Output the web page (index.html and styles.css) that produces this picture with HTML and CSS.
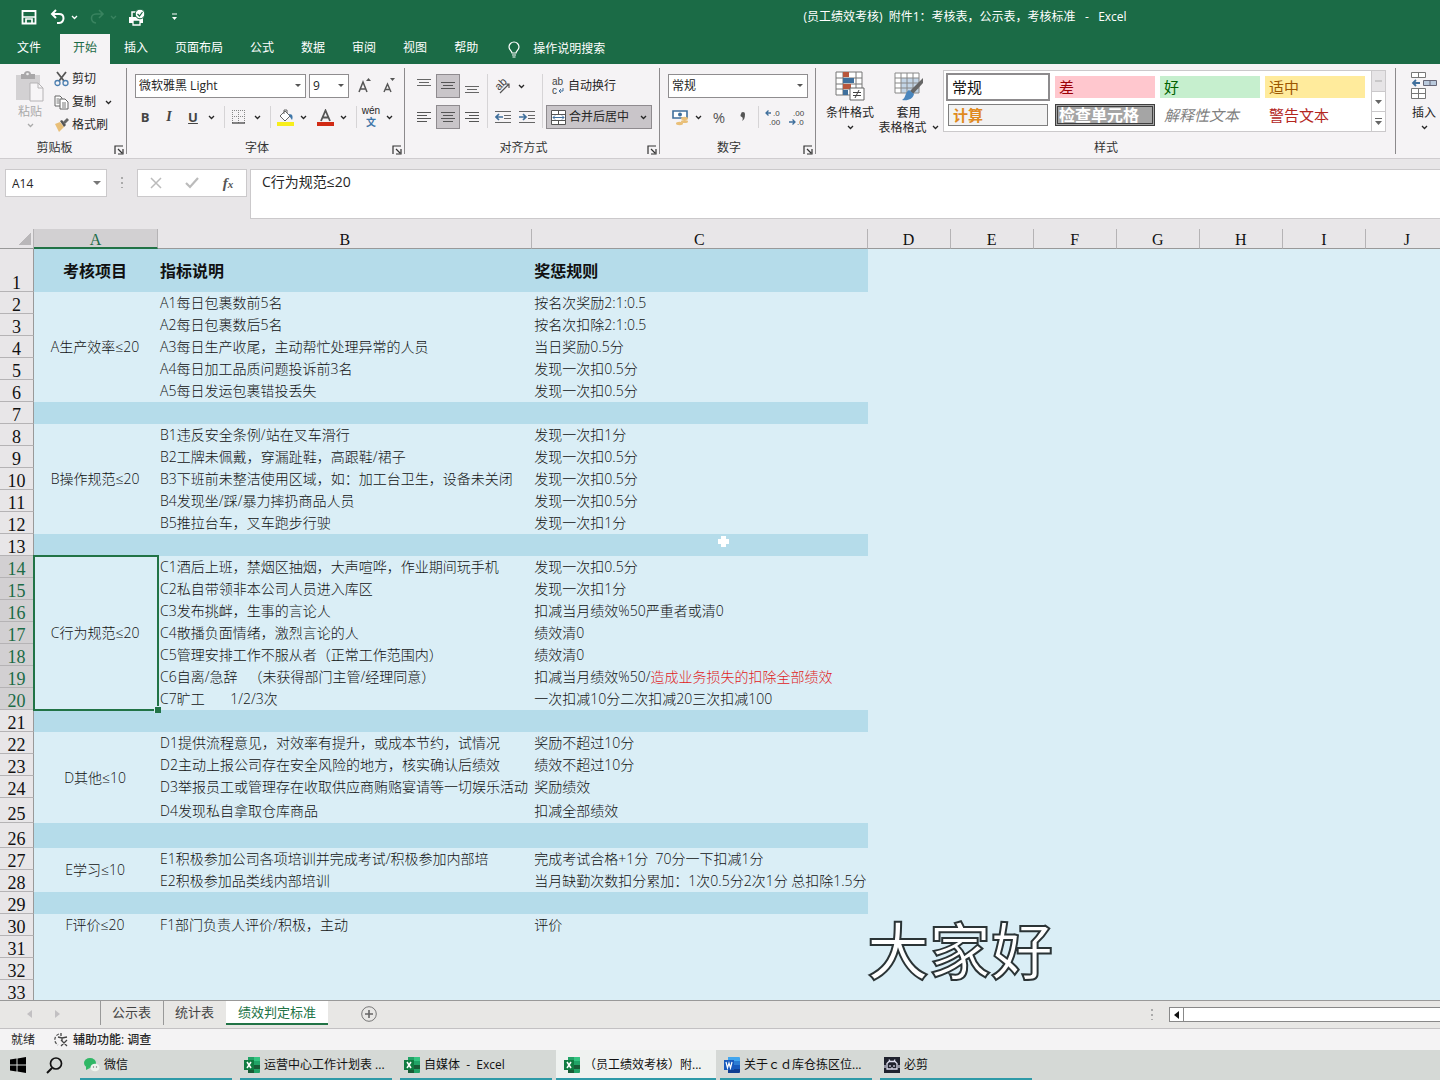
FILE: index.html
```html
<!DOCTYPE html>
<html lang="zh-CN">
<head>
<meta charset="utf-8">
<title>(员工绩效考核) 附件1 - Excel</title>
<link rel="stylesheet" href="styles.css">
</head>
<body>
<svg class="defs" aria-hidden="true">
  <symbol id="chev" viewBox="0 0 7 5"><path d="M1 1l2.500 2.500L6 1" fill="none" stroke="currentColor" stroke-width="1.300"/></symbol>
  <symbol id="launch" viewBox="0 0 10 10"><path d="M1 9V1h8M4 4l4 4M9 4v5H4" fill="none" stroke="currentColor" stroke-width="1.200"/></symbol>
  <symbol id="excel" viewBox="0 0 16 16"><path d="M4 0h11a1 1 0 011 1v14a1 1 0 01-1 1H4z" fill="#21a366"/><path d="M4 4h6v4H4z" fill="#107c41"/><path d="M10 8h6v4h-6zM4 8h6v8H4z" fill="#185c37"/><path d="M10 0h5a1 1 0 011 1v3h-6z" fill="#33c481"/><path d="M0 3h10v10H0z" fill="#107c41"/><path d="M3 5l4 6M7 5l-4 6" stroke="#fff" stroke-width="1.500"/></symbol>
</svg>
<header class="top">
  <div class="titlebar">
    <button class="q save" aria-label="保存"><svg width="16" height="16" viewBox="0 0 16 16"><path d="M1.500 2h13v12.500h-13z" fill="none" stroke="#fff" stroke-width="1.800"/><path d="M2 8h12M5 14v-4h6v4" fill="none" stroke="#fff" stroke-width="1.700"/></svg></button>
    <button class="q" aria-label="撤消"><svg width="16" height="16" viewBox="0 0 16 16"><path d="M6 1L2 5l4 4M2 5h7c6 0 6 8 0 9H7" fill="none" stroke="#fff" stroke-width="2"/></svg></button>
    <button class="q arrow" aria-label="撤消列表"><svg width="7" height="5"><use href="#chev"/></svg></button>
    <button class="q dim redo" aria-label="恢复"><svg width="16" height="16" viewBox="0 0 16 16"><path d="M10 1l4 4-4 4M14 5H7c-6 0-6 8 0 9" fill="none" stroke="currentColor" stroke-width="1.600"/></svg></button>
    <button class="q arrow dim" aria-label="恢复列表"><svg width="7" height="5"><use href="#chev"/></svg></button>
    <button class="q print" aria-label="打印预览"><svg width="17" height="17" viewBox="0 0 17 17"><path d="M1 8h14v6H1z" fill="#fff"/><path d="M4 8V3h5" fill="none" stroke="#fff" stroke-width="1.500"/><path d="M5 11h7v5H5z" fill="#1b6b46" stroke="#fff" stroke-width="1.300"/><circle cx="12" cy="5" r="4.800" fill="#fff" stroke="#1b6b46"/><path d="M9.500 5l2 2 3-4" fill="none" stroke="#1b6b46" stroke-width="1.200"/></svg></button>
    <button class="q more" aria-label="自定义快速访问工具栏"><svg width="7" height="8" viewBox="0 0 7 8"><path d="M1 1h5" stroke="#fff"/><path d="M1 4h5L3.500 7z" fill="#fff"/></svg></button>
    <h1>(员工绩效考核)&nbsp; 附件1：考核表，公示表，考核标准&nbsp;&nbsp; -&nbsp;&nbsp; Excel</h1>
  </div>
  <nav class="tabs">
    <a class="file" href="#file">文件</a><a class="on" href="#home">开始</a><a href="#insert">插入</a><a href="#layout">页面布局</a><a href="#formula">公式</a><a href="#data">数据</a><a href="#review">审阅</a><a href="#view">视图</a><a href="#help">帮助</a>
    <a class="tell" href="#tell"><svg width="14" height="17" viewBox="0 0 14 17"><path d="M5 12c0-2-3-3-3-6a5 5 0 0110 0c0 3-3 4-3 6zM5 14h4M5.500 16h3" fill="none" stroke="#fff" stroke-width="1.200"/></svg>操作说明搜索</a>
  </nav>
</header>

<section class="ribbon">
  <div class="group clip">
    <div class="body">
      <button class="paste"><svg width="30" height="32" viewBox="0 0 30 32"><path d="M1 4h24v25H1z" fill="#d3d1d3"/><path d="M6 3h3c0-4 7-4 7 0h4v5H6z" fill="#a9a7a9"/><circle cx="12.500" cy="3" r="1.300" fill="#eee"/><path d="M15 12h8l5 5v13H15z" fill="#f7f5f7" stroke="#b5b3b5"/><path d="M23 12v5h5" fill="none" stroke="#b5b3b5"/></svg><span>粘贴</span><svg width="7" height="5"><use href="#chev"/></svg></button>
      <div class="cliplist">
        <button><svg width="15" height="16" viewBox="0 0 15 16"><path d="M3 1l7 9M12 1L5 10" stroke="#555" stroke-width="1.800"/><circle cx="3.500" cy="12" r="2.500" fill="none" stroke="#4c7fb0" stroke-width="1.300"/><circle cx="11.500" cy="12" r="2.500" fill="none" stroke="#4c7fb0" stroke-width="1.300"/></svg>剪切</button>
        <button><svg width="15" height="16" viewBox="0 0 15 16"><path d="M1 2h5l2 2v8H1z" fill="#fff" stroke="#666"/><path d="M6 5h5l3 3v7H6z" fill="#fff" stroke="#666"/><path d="M2.500 5h3M2.500 7h3M2.500 9h3M8 9h4M8 11h4M8 13h4" stroke="#777"/></svg>复制<svg class="end" width="7" height="5"><use href="#chev"/></svg></button>
        <button><svg width="15" height="16" viewBox="0 0 15 16"><path d="M1 7l5-2 4 5-5 5z" fill="#e9bf78"/><path d="M6 4l4 6 2-2-4-5z" fill="#555"/><path d="M9 5l4-4 2 2-4 4z" fill="#666"/></svg>格式刷</button>
      </div>
    </div>
    <div class="label launch">剪贴板<svg width="10" height="10"><use href="#launch"/></svg></div>
  </div>

  <div class="group font">
    <div class="body rows">
      <div class="line"><span class="combo face"><select aria-label="字体"><option>微软雅黑 Light</option></select></span><span class="combo size"><select aria-label="字号"><option>9</option></select></span><button class="i grow" aria-label="增大字号"><svg width="16" height="18" viewBox="0 0 16 18"><path d="M2 15L6 5l4 10M3.500 12h5" fill="none" stroke="#555" stroke-width="1.500"/><path d="M9 4l2.500-3L14 4z" fill="#555"/></svg></button><button class="i" aria-label="减小字号"><svg width="16" height="18" viewBox="0 0 16 18"><path d="M3 15l3.500-8 3.500 8M4.500 12.500h4" fill="none" stroke="#555" stroke-width="1.400"/><path d="M9 1l2.500 3L14 1z" fill="#555"/></svg></button></div>
      <div class="line tools"><button class="i b">B</button><button class="i it">I</button><button class="i u">U</button><button class="v" aria-label="下划线样式"><svg width="7" height="5"><use href="#chev"/></svg></button><i class="sep"></i>
        <button class="i" aria-label="边框"><svg width="14" height="14" viewBox="0 0 14 14"><path d="M.5 0v14M6.500 0v14M12.500 0v14M0 .5h13M0 6.500h13" stroke="#888" stroke-dasharray="1 1"/><path d="M0 13h13" stroke="#444" stroke-width="1.300"/></svg></button><button class="v" aria-label="边框列表"><svg width="7" height="5"><use href="#chev"/></svg></button><i class="sep"></i>
        <button class="i" aria-label="填充颜色"><svg width="17" height="17" viewBox="0 0 17 17"><path d="M3 7l5-5 5 5-5 5z" fill="#fff" stroke="#666"/><path d="M7 5V1h3v3" fill="none" stroke="#666"/><path d="M12 5c4 0 4 3 3 6l-2-3z" fill="#3f76a8"/><path d="M0 13h17v4H0z" fill="#f7ee1c"/></svg></button><button class="v" aria-label="填充颜色列表"><svg width="7" height="5"><use href="#chev"/></svg></button>
        <button class="i gapl" aria-label="字体颜色"><svg width="17" height="17" viewBox="0 0 17 17"><path d="M4 12L8.500 1.500 13 12M5.500 8.500h6" fill="none" stroke="#555" stroke-width="1.800"/><path d="M0 13h17v4H0z" fill="#d12a14"/></svg></button><button class="v" aria-label="字体颜色列表"><svg width="7" height="5"><use href="#chev"/></svg></button><i class="sep"></i>
        <button class="i wen" aria-label="拼音指南"><span>wén</span><b>文</b></button><button class="v" aria-label="拼音列表"><svg width="7" height="5"><use href="#chev"/></svg></button></div>
    </div>
    <div class="label launch">字体<svg width="10" height="10"><use href="#launch"/></svg></div>
  </div>

  <div class="group align">
    <div class="body">
      <div class="rows">
        <div class="line"><button class="i" aria-label="顶端对齐"><svg width="14" height="16" viewBox="0 0 14 16"><path d="M0 1.500h14M2 4.500h10M0 7.500h14" stroke="#666"/></svg></button><button class="i on" aria-label="垂直居中"><svg width="14" height="16" viewBox="0 0 14 16"><path d="M0 4.500h14M2 7.500h10M0 10.500h14" stroke="#555"/></svg></button><button class="i" aria-label="底端对齐"><svg width="14" height="16" viewBox="0 0 14 16"><path d="M0 8.500h14M2 11.500h10M0 14.500h14" stroke="#666"/></svg></button></div>
        <div class="line"><button class="i" aria-label="左对齐"><svg width="14" height="12" viewBox="0 0 14 12"><path d="M0 1.500h14M0 4.500h10M0 7.500h14M0 10.500h10" stroke="#555"/></svg></button><button class="i on" aria-label="居中"><svg width="14" height="12" viewBox="0 0 14 12"><path d="M0 1.500h14M2 4.500h10M0 7.500h14M2 10.500h10" stroke="#555"/></svg></button><button class="i" aria-label="右对齐"><svg width="14" height="12" viewBox="0 0 14 12"><path d="M0 1.500h14M4 4.500h10M0 7.500h14M4 10.500h10" stroke="#555"/></svg></button></div>
      </div>
      <i class="sep tall"></i>
      <div class="rows">
        <div class="line"><button class="i" aria-label="方向"><svg width="18" height="18" viewBox="0 0 18 18"><text class="tiny" x="2" y="11" font-size="11" transform="rotate(-45 7 9)">ab</text><path d="M6 16L15 7M11 7h4v4" fill="none" stroke="#555" stroke-width="1.200"/></svg></button><button class="v" aria-label="方向列表"><svg width="7" height="5"><use href="#chev"/></svg></button></div>
        <div class="line"><button class="i" aria-label="减少缩进"><svg width="17" height="14" viewBox="0 0 17 14"><path d="M0 1.500h16M9 5.500h7M9 8.500h7M0 12.500h16" stroke="#666"/><path d="M8 7H1M4 4L1 7l3 3" fill="none" stroke="#3f6f9c" stroke-width="1.700"/></svg></button><button class="i" aria-label="增加缩进"><svg width="17" height="14" viewBox="0 0 17 14"><path d="M0 1.500h16M9 5.500h7M9 8.500h7M0 12.500h16" stroke="#666"/><path d="M0 7h7M4 4l3 3-3 3" fill="none" stroke="#3f6f9c" stroke-width="1.700"/></svg></button></div>
      </div>
      <i class="sep tall"></i>
      <div class="rows">
        <button class="wide"><svg width="14" height="20" viewBox="0 0 14 20"><text class="tiny" x="1" y="9" font-size="10">ab</text><text class="tiny" x="1" y="18" font-size="10">c</text><path d="M12 12v3H8M10 13l-2 2 2 2" fill="none" stroke="#3f6f9c"/></svg>自动换行</button>
        <button class="wide on"><svg width="15" height="15" viewBox="0 0 15 15"><path d="M.5.500h14v14H.5zM.5 4.500h14M.5 10.500h14M7.500 0v4M7.500 11v4" fill="#fff" stroke="#555"/><path d="M2 7.500h11M4 5.500l-2 2 2 2M11 5.500l2 2-2 2" fill="none" stroke="#3f6f9c"/></svg>合并后居中<svg class="end" width="7" height="5"><use href="#chev"/></svg></button>
      </div>
    </div>
    <div class="label launch">对齐方式<svg width="10" height="10"><use href="#launch"/></svg></div>
  </div>

  <div class="group number">
    <div class="body rows">
      <div class="line"><span class="combo fmt"><select aria-label="数字格式"><option>常规</option></select></span></div>
      <div class="line tools"><button class="i" aria-label="会计数字格式"><svg width="17" height="17" viewBox="0 0 17 17"><path d="M1 2h14v7H1z" fill="#fff" stroke="#3f6f9c" stroke-width="1.600"/><circle cx="8" cy="5.500" r="2" fill="#3f6f9c"/><ellipse cx="12.500" cy="9.500" rx="3.500" ry="1.700" fill="#e9bf78"/><ellipse cx="12.500" cy="12.500" rx="3.500" ry="1.500" fill="#e9bf78"/><ellipse cx="7.500" cy="14.500" rx="3.500" ry="1.700" fill="#e9bf78"/></svg></button><button class="v" aria-label="会计格式列表"><svg width="7" height="5"><use href="#chev"/></svg></button><button class="i pct">%</button><button class="i comma" aria-label="千位分隔样式"><svg width="6" height="10" viewBox="0 0 6 10"><path d="M1 2a2 2 0 114 0c0 4-1 6-3 7 1-2 1-3 0-4a2 2 0 01-1-3z" fill="#555"/></svg></button><i class="sep"></i>
        <button class="i" aria-label="增加小数位数"><svg width="17" height="20" viewBox="0 0 17 20"><text class="tiny" x="8" y="9" font-size="8">.0</text><text class="tiny" x="4" y="18" font-size="8">.00</text><path d="M6 6H1M3.500 3.500L1 6l2.500 2.500" fill="none" stroke="#3f6f9c" stroke-width="1.300"/></svg></button><button class="i" aria-label="减少小数位数"><svg width="17" height="20" viewBox="0 0 17 20"><text class="tiny" x="4" y="9" font-size="8">.00</text><text class="tiny" x="8" y="18" font-size="8">.0</text><path d="M0 15h6M3.500 12.500L6 15l-2.500 2.500" fill="none" stroke="#3f6f9c" stroke-width="1.300"/></svg></button></div>
    </div>
    <div class="label launch">数字<svg width="10" height="10"><use href="#launch"/></svg></div>
  </div>

  <div class="group styles">
    <div class="body">
      <button class="big cond"><svg width="30" height="30" viewBox="0 0 30 30"><path d="M1 1h26v23H1zM1 7h26M1 13h26M1 18h26M8 1v23M21 1v23" fill="#fff" stroke="#777"/><path d="M8 1h6v5H8z" fill="#b8573c"/><path d="M8 7h11v5H8z" fill="#3f6f9c"/><path d="M8 13h8v5H8z" fill="#b8573c"/><path d="M8 19h5v5H8z" fill="#3f6f9c"/><path d="M15 17h14v12H15z" fill="#fff" stroke="#666"/><path d="M18 21.500h8M18 24.500h8M24 19l-4 8" stroke="#444"/></svg><span>条件格式</span><svg width="7" height="5"><use href="#chev"/></svg></button>
      <button class="big tbl"><svg width="30" height="30" viewBox="0 0 30 30"><path d="M1 2h24v20H1z" fill="#fff"/><path d="M7 7h18v15H7z" fill="#c3d5e6"/><path d="M1 2h24v20H1zM1 7h24M1 12h24M1 17h24M7 2v20M13 2v20M19 2v20" fill="none" stroke="#888"/><path d="M29 7v5L19 23l-3-3z" fill="#666"/><path d="M15 19l5 4c-1 5-6 7-12 6 4-2 3-8 7-10z" fill="#4a86bd"/></svg><span>套用</span><span>表格格式 <svg width="7" height="5"><use href="#chev"/></svg></span></button>
      <div class="gallery">
        <div class="swatches">
          <button class="s normal">常规</button><button class="s bad">差</button><button class="s good">好</button><button class="s neutral">适中</button>
          <button class="s calc">计算</button><button class="s check">检查单元格</button><button class="s expl">解释性文本</button><button class="s warn">警告文本</button>
        </div>
        <div class="scroll"><button aria-label="上" class="off"><svg width="7" height="4"><path d="M0 2h7" stroke="#aaa"/></svg></button><button aria-label="下"><svg width="7" height="4"><path d="M0 0h7L3.500 4z" fill="#666"/></svg></button><button aria-label="其他"><svg width="7" height="8"><path d="M0 .5h7" stroke="#666"/><path d="M0 3h7L3.500 7z" fill="#666"/></svg></button></div>
      </div>
    </div>
    <div class="label">样式</div>
  </div>
  <div class="group cells">
    <div class="body">
      <button class="big ins"><svg width="26" height="30" viewBox="0 0 26 30"><path d="M.5 1.500h14v5H.5zM7.500 1.500v5M.5 17.500h14v10H.5zM.5 22.500h14M7.500 17.500v10" fill="#fff" stroke="#777"/><path d="M12.500 9.500h13v5h-13zM19 9.500v5" fill="#b9c9dc" stroke="#667"/><path d="M9 12H2M5 9l-3 3 3 3" fill="none" stroke="#3f6f9c" stroke-width="1.800"/></svg><span>插入</span><svg width="7" height="5"><use href="#chev"/></svg></button>
    </div>
  </div>
</section>

<section class="formula">
  <span class="namebox"><input aria-label="名称框" value="A14"></span>
  <i class="dots"></i>
  <div class="fx"><button aria-label="取消"><svg width="12" height="12" viewBox="0 0 12 12"><path d="M1 1l10 10M11 1L1 11" stroke="#bbb" stroke-width="1.500"/></svg></button><button aria-label="输入"><svg width="14" height="12" viewBox="0 0 14 12"><path d="M1 6l4 4 8-9" fill="none" stroke="#bbb" stroke-width="2.200"/></svg></button><button class="fn"><em>f</em><small>x</small></button></div>
  <textarea aria-label="编辑栏" rows="2">C行为规范≤20</textarea>
</section>

<main class="sheet">
  <table>
    <colgroup><col class="cn"><col class="ca"><col class="cb"><col class="cc"><col class="cd"><col class="cd"><col class="cd"><col class="cd"><col class="cd"><col class="cd"><col class="cd"></colgroup>
    <thead><tr><th class="corner"></th><th class="sel">A</th><th>B</th><th>C</th><th>D</th><th>E</th><th>F</th><th>G</th><th>H</th><th>I</th><th>J</th></tr></thead>
    <tbody>
      <tr class="head"><th>1</th><td class="m">考核项目</td><td>指标说明</td><td>奖惩规则</td></tr>
      <tr><th>2</th><td class="m" rowspan="5">A生产效率≤20</td><td>A1每日包裹数前5名</td><td>按名次奖励2:1:0.5</td></tr>
      <tr><th>3</th><td>A2每日包裹数后5名</td><td>按名次扣除2:1:0.5</td></tr>
      <tr><th>4</th><td>A3每日生产收尾，主动帮忙处理异常的人员</td><td>当日奖励0.5分</td></tr>
      <tr><th>5</th><td>A4每日加工品质问题投诉前3名</td><td>发现一次扣0.5分</td></tr>
      <tr><th>6</th><td>A5每日发运包裹错投丢失</td><td>发现一次扣0.5分</td></tr>
      <tr class="band"><th>7</th><td></td><td></td><td></td></tr>
      <tr><th>8</th><td class="m" rowspan="5">B操作规范≤20</td><td>B1违反安全条例/站在叉车滑行</td><td>发现一次扣1分</td></tr>
      <tr><th>9</th><td>B2工牌未佩戴，穿漏趾鞋，高跟鞋/裙子</td><td>发现一次扣0.5分</td></tr>
      <tr><th>10</th><td>B3下班前未整洁使用区域，如：加工台卫生，设备未关闭</td><td>发现一次扣0.5分</td></tr>
      <tr><th>11</th><td>B4发现坐/踩/暴力摔扔商品人员</td><td>发现一次扣0.5分</td></tr>
      <tr><th>12</th><td>B5推拉台车，叉车跑步行驶</td><td>发现一次扣1分</td></tr>
      <tr class="band"><th>13</th><td></td><td></td><td class="host"><svg class="cursor" width="13" height="13" viewBox="0 0 13 13"><path d="M4 1h5v3h3v5H9v3H4V9H1V4h3z" fill="#fff"/></svg></td></tr>
      <tr class="pick"><th>14</th><td class="m active" rowspan="7">C行为规范≤20</td><td>C1酒后上班，禁烟区抽烟，大声喧哗，作业期间玩手机</td><td>发现一次扣0.5分</td></tr>
      <tr class="pick"><th>15</th><td>C2私自带领非本公司人员进入库区</td><td>发现一次扣1分</td></tr>
      <tr class="pick"><th>16</th><td>C3发布挑衅，生事的言论人</td><td>扣减当月绩效%50严重者或清0</td></tr>
      <tr class="pick"><th>17</th><td>C4散播负面情绪，激烈言论的人</td><td>绩效清0</td></tr>
      <tr class="pick"><th>18</th><td>C5管理安排工作不服从者（正常工作范围内）</td><td>绩效清0</td></tr>
      <tr class="pick"><th>19</th><td>C6自离/急辞   （未获得部门主管/经理同意）</td><td>扣减当月绩效%50/<span class="red">造成业务损失的扣除全部绩效</span></td></tr>
      <tr class="pick"><th>20</th><td>C7旷工       1/2/3次</td><td>一次扣减10分二次扣减20三次扣减100</td></tr>
      <tr class="band"><th>21</th><td></td><td></td><td></td></tr>
      <tr><th>22</th><td class="m" rowspan="4">D其他≤10</td><td>D1提供流程意见，对效率有提升，或成本节约，试情况</td><td>奖励不超过10分</td></tr>
      <tr><th>23</th><td>D2主动上报公司存在安全风险的地方，核实确认后绩效</td><td>绩效不超过10分</td></tr>
      <tr><th>24</th><td>D3举报员工或管理存在收取供应商贿赂宴请等一切娱乐活动</td><td>奖励绩效</td></tr>
      <tr class="taller"><th>25</th><td>D4发现私自拿取仓库商品</td><td>扣减全部绩效</td></tr>
      <tr class="band taller"><th>26</th><td></td><td></td><td></td></tr>
      <tr><th>27</th><td class="m" rowspan="2">E学习≤10</td><td>E1积极参加公司各项培训并完成考试/积极参加内部培</td><td>完成考试合格+1分  70分一下扣减1分</td></tr>
      <tr><th>28</th><td>E2积极参加品类线内部培训</td><td>当月缺勤次数扣分累加：1次0.5分2次1分 总扣除1.5分</td></tr>
      <tr class="band"><th>29</th><td></td><td></td><td></td></tr>
      <tr><th>30</th><td class="m">F评价≤20</td><td>F1部门负责人评价/积极，主动</td><td>评价</td></tr>
      <tr><th>31</th><td></td><td></td><td></td></tr>
      <tr><th>32</th><td></td><td></td><td></td></tr>
      <tr><th>33</th><td></td><td></td><td></td></tr>
    </tbody>
  </table>
  <p class="caption">大家好</p>
</main>

<nav class="sheettabs">
  <button class="nav" aria-label="上一个工作表"><svg width="5" height="8"><path d="M5 0v8L0 4z" fill="#c2c0c2"/></svg></button>
  <button class="nav" aria-label="下一个工作表"><svg width="5" height="8"><path d="M0 0v8l5-4z" fill="#c2c0c2"/></svg></button>
  <a class="first" href="#s1">公示表</a><a href="#s2">统计表</a><a class="on" href="#s3">绩效判定标准</a>
  <button class="add" aria-label="新工作表"><svg width="16" height="16" viewBox="0 0 16 16"><circle cx="8" cy="8" r="7.300" fill="none" stroke="#777"/><path d="M8 4v8M4 8h8" stroke="#666" stroke-width="1.600"/></svg></button>
  <i class="dots"></i>
  <div class="hscroll"><button aria-label="向左滚动"><svg width="5" height="8"><path d="M5 0v8L0 4z" fill="#111"/></svg></button></div>
</nav>
<footer class="status"><span>就绪</span><button><svg width="16" height="16" viewBox="0 0 16 16"><path d="M6 2a6 6 0 00-1 11" fill="none" stroke="#555" stroke-width="1.300" stroke-dasharray="3 1.500"/><path d="M5 5l4 1 5-1M9 6v3M8 8l6 6M14 8l-6 6M8 1v3" fill="none" stroke="#444" stroke-width="1.300"/></svg>辅助功能: 调查</button></footer>

<nav class="taskbar">
  <button class="sys" aria-label="开始菜单"><svg width="16" height="16" viewBox="0 0 16 16"><path d="M0 2.500L6.500 1.500v6H0zM7.500 1.400L16 0v7.500H7.500zM0 8.500h6.500v6L0 13.500zM7.500 8.500H16V16l-8.500-1.400z" fill="#000"/></svg></button>
  <button class="sys" aria-label="搜索"><svg width="17" height="17" viewBox="0 0 17 17"><circle cx="10" cy="6.500" r="5.500" fill="none" stroke="#111" stroke-width="1.700"/><path d="M6 11l-5 5" stroke="#111" stroke-width="2"/></svg></button>
  <button class="app"><svg width="16" height="16" viewBox="0 0 16 16"><ellipse cx="6" cy="6" rx="6" ry="5" fill="#2fb765"/><path d="M2 9l0 4 4-2z" fill="#2fb765"/><ellipse cx="11" cy="10.500" rx="4.500" ry="3.800" fill="#eef4ee"/><circle cx="9.500" cy="10" r=".7" fill="#777"/><circle cx="12.500" cy="10" r=".7" fill="#777"/></svg>微信</button>
  <button class="app"><svg width="16" height="16"><use href="#excel"/></svg>运营中心工作计划表 ...</button>
  <button class="app"><svg width="16" height="16"><use href="#excel"/></svg>自媒体&nbsp; -&nbsp; Excel</button>
  <button class="app on"><svg width="16" height="16"><use href="#excel"/></svg>（员工绩效考核）附...</button>
  <button class="app"><svg width="16" height="16" viewBox="0 0 16 16"><path d="M4 0h11a1 1 0 011 1v3H4z" fill="#41a5ee"/><path d="M4 4h12v4H4z" fill="#2b7cd3"/><path d="M4 8h12v4H4z" fill="#185abd"/><path d="M4 12h12v3a1 1 0 01-1 1H4z" fill="#103f91"/><path d="M0 3h10v10H0z" fill="#185abd"/><path d="M2 5l1.500 6L5 6l1.500 5L8 5" fill="none" stroke="#fff" stroke-width="1.200"/></svg>关于ｃｄ库仓拣区位...</button>
  <button class="app"><svg width="16" height="16" viewBox="0 0 16 16"><path d="M0 0h16v16H0z" fill="#20232f"/><path d="M3 6.500l2-2h6l2 2V12H3z" fill="none" stroke="#dde" stroke-width="1.300"/><path d="M5 2.500l1 2M11 2.500l-1 2M6 8v2M10 8v2M7 11h2M1 8v3M15 8v3" stroke="#dde" stroke-width="1.200"/></svg>必剪</button>
</nav>
</body>
</html>
```
FILE: styles.css
```css
*{box-sizing:border-box}
body{margin:0;height:100vh;display:flex;flex-direction:column;overflow:hidden;background:#e8e6e8;color:#262626;font:12px/16px "Open Sans","Noto Sans CJK SC",sans-serif}
button,input,select,textarea{font:inherit;color:inherit;border:0;background:none;padding:0;margin:0;border-radius:0}
button{display:flex;align-items:center;justify-content:center;white-space:nowrap}
a{color:inherit;text-decoration:none}
svg{flex:none;display:block}
.defs{position:absolute;width:0;height:0}
i{font-style:normal}
.tiny{font-family:"Liberation Sans",sans-serif;fill:#444}

/* title bar and ribbon tabs */
.top{background:#1b6b46;color:#fff}
.titlebar{display:flex;align-items:center;height:34px;padding-left:19px}
.q{width:20px;height:24px}
.q.save{margin-right:9px}
.q.arrow{width:12px}
.q.dim{color:#39835f}
.q.redo{margin-left:7px}
.q.print{margin-left:7px}
.q.more{margin-left:18px}
.titlebar h1{flex:1;margin:0;padding-left:306px;text-align:center;font:inherit;white-space:nowrap}
.tabs{display:flex;gap:1px;height:30px;padding-left:4px}
.tabs a{padding:0 13px;line-height:28px}
.tabs .file{margin-right:5px}
.tabs .on{background:#f5f3f5;color:#1b6b46}
.tabs .tell{display:flex;align-items:center;gap:12px;padding-left:15px}

/* ribbon */
.ribbon{display:flex;flex:none;height:95px;overflow:hidden;background:#f5f3f5;border-bottom:1px solid #cfcccf}
.group{display:grid;grid-template-rows:74px 20px;flex:none;position:relative}
.group::after{content:"";position:absolute;right:0;top:4px;bottom:4px;width:1px;background:#8c8a8c}
.cells::after{display:none}
.body{display:flex;min-width:0}
.label{display:flex;justify-content:center;align-items:center;color:#333}
.label.launch{padding-right:18px}
.label svg{position:absolute;right:3px;bottom:3px}
.rows{display:grid;grid-template-rows:24px 24px;gap:7px;padding-top:10px;align-content:start}
.line{display:flex;align-items:center}
.i{width:24px;height:24px}
.v{width:12px;height:24px}
.sep{width:1px;height:22px;margin:0 2px 0 7px;background:#d6d4d6}
.sep.tall{height:54px;margin:10px 3px 0}
.combo{position:relative;display:block;height:24px;background:#fff;border:1px solid #8f8d8f}
.combo select{appearance:none;width:100%;height:22px;padding-left:3px;line-height:20px}
.combo::after{content:"";position:absolute;right:4px;top:9px;border:3px solid transparent;border-top-color:#555;pointer-events:none}
.on.i,.on.wide{background:#c9c5c9;border:1px solid #8f8b8f}
.clip{width:127px}
.paste{flex-direction:column;justify-content:flex-start;width:28px;margin:7px 0 0 16px;color:#aaa;overflow:visible}
.paste span{margin:1px 0 3px}
.cliplist{display:flex;flex-direction:column;gap:7px;padding:7px 0 0 10px}
.cliplist button{height:16px;gap:3px;justify-content:flex-start}
.cliplist .end{margin-left:6px}
.font{width:278px}
.font .line:first-child{padding-left:8px}
.font .tools{padding-left:6px}
.face{width:171px;margin-right:3px}
.size{width:40px}
.grow{margin-left:4px}
.b,.u{font-weight:700;font-size:13px;color:#444}
.it{font:italic 700 14px/16px "Liberation Serif",serif;color:#444}
.u{text-decoration:underline}
.gapl{margin-left:4px}
.wen{flex-direction:column;font:10px/12px "Liberation Sans","Noto Sans CJK SC",sans-serif}
.wen b{color:#3f76a8}
.align{width:255px}
.align .body{padding-left:7px}
.wide{gap:3px;height:24px;width:106px;justify-content:flex-start;padding:0 3px 0 4px;border:1px solid transparent}
.wide .end{margin-left:8px}
.number{width:156px}
.number .rows{padding-left:8px}
.fmt{width:140px}
.pct{font-size:15px;color:#555;margin-left:3px}
.comma{margin-right:-4px}
.styles{width:580px}
.styles .body{padding-left:10px}
.big{flex-direction:column;justify-content:flex-start;padding-top:7px;height:72px}
.big span{line-height:15px;display:flex;align-items:center;gap:5px}
.cond{width:48px}
.cond span,.ins span{margin:4px 0 5px}
.tbl{width:59px;margin-left:5px}
.tbl span:first-of-type{margin-top:4px}
.gallery{display:flex;margin:6px 0 0 5px;width:443px;height:62px;background:#fff;border:1px solid #cbc9cb}
.swatches{display:grid;grid-template:28px 22px/104px 100px 100px 100px;column-gap:5px;row-gap:3px;padding:2px;flex:1;align-items:center}
.s{justify-content:flex-start;height:22px;padding-left:4px;font-size:15px;line-height:18px;color:#111}
.normal{height:28px;padding-left:4px;border:2px solid #8d8b8d}
.bad{background:#ffc7ce;color:#9c0006}
.good{background:#c6efce;color:#006100}
.neutral{background:#ffeb9c;color:#9c5700}
.calc{margin:0 2px;background:#f2f2f2;border:1px solid #7f7f7f;color:#e08a1e;font-weight:700}
.check{background:#a5a5a5;border:3px double #3f3f3f;padding-left:1px;color:#fff;font-weight:700;font-size:16px}
.expl{color:#7f7f7f;font-style:italic}
.warn{color:#b3261e}
.scroll{display:grid;grid-template-rows:20px 20px 20px;width:14px;border-left:1px solid #cbc9cb}
.scroll button+button{border-top:1px solid #cbc9cb}
.scroll .off{background:#e6e4e6}
.cells .body{padding-left:15px}

/* formula bar */
.formula{display:flex;flex:none;height:70px;padding:10px 0 0 5px;align-items:flex-start}
.namebox{position:relative;width:102px;height:28px;background:#fff;border:1px solid #cbc9cb}
.namebox input{width:80px;height:26px;padding-left:6px}
.namebox::after{content:"";position:absolute;right:5px;top:11px;border:4px solid transparent;border-top-color:#777}
.dots{width:2px;height:11px;background:repeating-linear-gradient(#aaa 0 2px,transparent 2px 5px)}
.formula .dots{margin:8px 14px 0 14px}
.fx{display:flex;width:110px;height:28px;background:#fff;border:1px solid #cbc9cb}
.fx button{width:36px}
.fn{font-family:"Liberation Serif",serif;font-style:italic;font-weight:700;color:#555}
.fn em{font-size:15px}
.fn small{font-size:11px;padding-top:2px}
.formula textarea{flex:1;height:50px;margin-left:3px;padding:2px 11px;resize:none;overflow:hidden;background:#fff;border:1px solid #cbc9cb;border-right:0;font-size:14px;line-height:20px}

/* worksheet */
.sheet{position:relative;flex:1;min-height:0;overflow:hidden;background:linear-gradient(#e8e6e8 19px,#999 19px 20px,#daeef6 20px)}
.sheet table{table-layout:fixed;width:1449px;border-collapse:separate;border-spacing:0}
.cn{width:34px}.ca{width:124px}.cb{width:374px}.cc{width:335px}.cd{width:83px}
.sheet th{padding:0;font:16px/16px "Liberation Serif",serif;color:#111;background:#e8e6e8}
thead th{height:20px;border-right:1px solid #b5b3b5;border-bottom:1px solid #999;vertical-align:bottom}
.sheet thead .corner{background:linear-gradient(135deg,#e8e6e8 50%,#b9b7b9 50%) 19px 4px/12px 12px no-repeat #e8e6e8}
.sheet thead .sel{background:#d2d0d2;color:#1b6b46;border-bottom:2px solid #217346;line-height:14px}
.sheet tbody th{height:22px;font-size:18px;line-height:15px;border-right:1px solid #999;border-bottom:1px solid #b5b3b5;vertical-align:bottom}
.sheet td{padding:0 2px;font-size:14px;font-weight:300;line-height:20px;white-space:pre;vertical-align:middle;color:#111}
.sheet .head th{height:43px}
.sheet .taller th{height:25px}
.sheet td.m{padding:0 3px 0 1px;text-align:center}
.head td,.band td{background:#b5dcea}
.sheet .head td{font-size:16px;font-weight:700}
.sheet .pick th{background:#d2d0d2;color:#1b6b46}
.active{position:relative}
.active::before{content:"";position:absolute;inset:-1px -1px -1px -1px;border:2px solid #217346}
.active::after{content:"";position:absolute;right:-3px;bottom:-3px;width:6px;height:6px;background:#217346;border:1px solid #daeef6;border-width:1px 0 0 1px}
.red{color:#e0221b}
.host{position:relative}
.cursor{position:absolute;left:185px;top:1px}
.caption{position:absolute;left:60%;bottom:4px;margin:0 0 0 3px;font-size:62px;line-height:90px;font-weight:500;color:#fff;-webkit-text-stroke:2px #2b3436;white-space:nowrap}

/* sheet tabs, status bar, task bar */
.sheettabs{display:flex;flex:none;height:29px;background:#e8e7e5;border-top:1px solid #999;border-bottom:1px solid #c3c1c3;padding-left:15px;color:#444}
.nav{width:28px;height:26px}
.sheettabs a{height:24px;padding:0 11px;margin-right:1px;font-size:13px;line-height:22px;border-left:1px solid #999}
.sheettabs .first{margin-left:29px}
.sheettabs .on{background:#fff;color:#217346;border-left:0;border-bottom:2px solid #217346;padding:0 12px}
.add{width:16px;height:26px;margin-left:32px}
.sheettabs .dots{margin:8px 16px 0 auto}
.hscroll{width:19%;height:15px;margin-top:6px;background:#fff;border:1px solid #888;border-right:0}
.hscroll button{width:14px;height:13px;border-right:1px solid #888}
.status{display:flex;flex:none;align-items:center;height:21px;padding-left:11px;gap:18px;background:#f4f3f4}
.status button{gap:4px;font-weight:500}
.taskbar{display:flex;flex:none;height:30px;background:#d5d9d6;color:#111}
.sys{width:36px}
.sys+.sys{margin-right:4px}
.app{position:relative;width:160px;justify-content:flex-start;gap:4px;padding-left:8px}
.app::after{content:"";position:absolute;left:4px;right:4px;bottom:0;height:2px;background:#2e9aa8}
.app.on{background:#eff2f0}
.app.on::after{left:0;right:0}
```
